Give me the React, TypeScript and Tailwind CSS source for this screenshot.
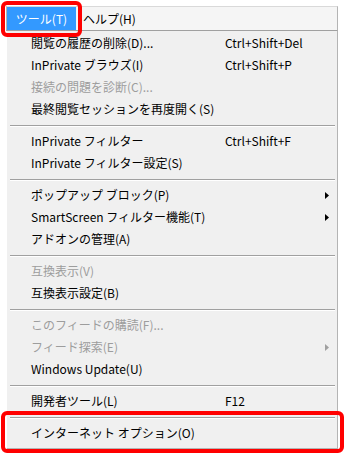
import React from "react";

type Item =
  | { kind: "sep" }
  | { kind: "item"; label: string; shortcut?: string; disabled?: boolean; submenu?: boolean };

const items: Item[] = [
  { kind: "item", label: "閲覧の履歴の削除(D)...", shortcut: "Ctrl+Shift+Del" },
  { kind: "item", label: "InPrivate ブラウズ(I)", shortcut: "Ctrl+Shift+P" },
  { kind: "item", label: "接続の問題を診断(C)...", disabled: true },
  { kind: "item", label: "最終閲覧セッションを再度開く(S)" },
  { kind: "sep" },
  { kind: "item", label: "InPrivate フィルター", shortcut: "Ctrl+Shift+F" },
  { kind: "item", label: "InPrivate フィルター設定(S)" },
  { kind: "sep" },
  { kind: "item", label: "ポップアップ ブロック(P)", submenu: true },
  { kind: "item", label: "SmartScreen フィルター機能(T)", submenu: true },
  { kind: "item", label: "アドオンの管理(A)" },
  { kind: "sep" },
  { kind: "item", label: "互換表示(V)", disabled: true },
  { kind: "item", label: "互換表示設定(B)" },
  { kind: "sep" },
  { kind: "item", label: "このフィードの購読(F)...", disabled: true },
  { kind: "item", label: "フィード探索(E)", disabled: true, submenu: true },
  { kind: "item", label: "Windows Update(U)" },
  { kind: "sep" },
  { kind: "item", label: "開発者ツール(L)", shortcut: "F12" },
  { kind: "sep" },
  { kind: "item", label: "インターネット オプション(O)" },
];

function Arrow({ disabled }: { disabled?: boolean }) {
  return (
    <svg width="4" height="7" viewBox="0 0 4 7" className="ml-auto mr-[8px]">
      <path d="M0 0 L4 3.5 L0 7 Z" fill={disabled ? "#a0a0a0" : "#000"} />
    </svg>
  );
}

export default function App() {
  return (
    <div
      className="relative w-[345px] h-[455px] overflow-hidden bg-white text-[12px] text-black"
      style={{ fontFamily: '"Noto Sans CJK JP", "Noto Sans", sans-serif' }}
    >
      <div className="pt-[6px] pl-[6px]">
        {/* menu bar */}
        <div className="flex h-[25px] w-[332px] border-t border-r border-l border-t-[#d9d9d9] border-x-[#b4b4b4] border-b border-b-[#a0a0a0] bg-[#f5f5f5]">
          <div className="flex w-[69px] items-center justify-center bg-[#3399ff] text-white leading-[23px]">
            ツール(T)
          </div>
          <div className="pl-[7px] leading-[23px]">ヘルプ(H)</div>
        </div>

        {/* dropdown */}
        <div className="ml-[1px] w-[331px] border-r border-b border-[#b4b4b4] bg-[#f0f0f0] pt-[1px] pb-[4px]">
          {items.map((it, i) =>
            it.kind === "sep" ? (
              <div key={i} className="h-[10px] pt-[5px]">
                <div className="ml-[3px] mr-[2px] border-t border-b border-t-[#a0a0a0] border-b-white" />
              </div>
            ) : (
              <div
                key={i}
                className={`flex h-[22px] items-center pl-[24px] leading-[22px] ${
                  it.disabled ? "text-[#9d9d9d]" : "text-black"
                }`}
              >
                <span className="w-[194px] shrink-0 whitespace-nowrap">{it.label}</span>
                {it.shortcut && <span className="whitespace-nowrap">{it.shortcut}</span>}
                {it.submenu && <Arrow disabled={it.disabled} />}
              </div>
            )
          )}
        </div>
      </div>

      {/* annotation boxes */}
      <div className="pointer-events-none absolute left-[1px] top-[1px] h-[36px] w-[81px] rounded-[6px] border-4 border-[#ff0000]" />
      <div className="pointer-events-none absolute left-[1px] top-[411px] h-[42px] w-[343px] rounded-[6px] border-4 border-[#ff0000]" />
    </div>
  );
}
